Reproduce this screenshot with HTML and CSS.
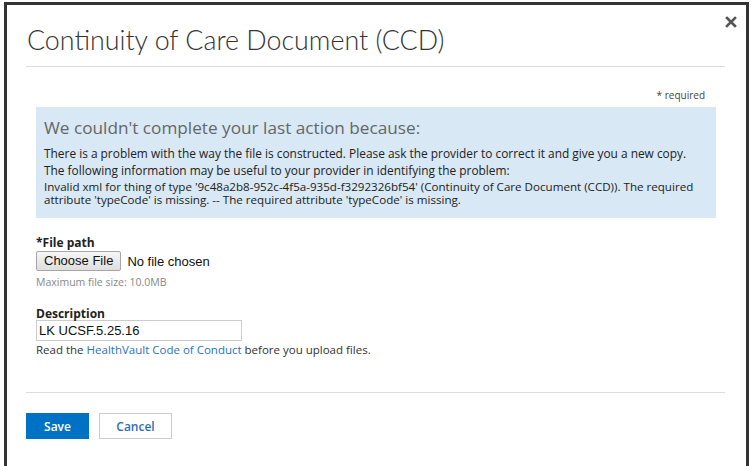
FILE: index.html
```html
<!DOCTYPE html>
<html>
<head>
<meta charset="utf-8">
<link rel="stylesheet" href="styles.css">
</head>
<body>
<div class="modal">
  <button class="close" aria-label="Close">
    <svg width="12" height="12" viewBox="0 0 12 12"><path d="M2 2 L10 10 M10 2 L2 10" stroke="#555" stroke-width="2.6" stroke-linecap="square"/></svg>
  </button>
  <h1 class="title">Continuity of Care Document (CCD)</h1>
  <div class="body">
    <div class="required">* required</div>
    <div class="alert">
      <h2 class="alert-title">We couldn't complete your last action because:</h2>
      <p class="alert-line">There is a problem with the way the file is constructed. Please ask the provider to correct it and give you a new copy.</p>
      <p class="alert-line">The following information may be useful to your provider in identifying the problem:</p>
      <p class="alert-detail">Invalid xml for thing of type '9c48a2b8-952c-4f5a-935d-f3292326bf54' (Continuity of Care Document (CCD)). The required attribute 'typeCode' is missing. -- The required attribute 'typeCode' is missing.</p>
    </div>
    <div class="field">
      <label class="label">*File path</label>
      <div class="file-row"><span class="file-btn">Choose File</span><span class="file-name">No file chosen</span></div>
      <div class="hint">Maximum file size: 10.0MB</div>
    </div>
    <div class="field field-desc">
      <label class="label">Description</label>
      <div class="input">LK UCSF.5.25.16</div>
      <div class="note">Read the <a class="link" href="#">HealthVault Code of Conduct</a> before you upload files.</div>
    </div>
  </div>
  <div class="footer">
    <button class="btn btn-primary">Save</button>
    <button class="btn btn-secondary">Cancel</button>
  </div>
</div>
</body>
</html>
```

FILE: styles.css
```css
html, body {
  margin: 0;
  padding: 0;
  background: #fff;
  overflow: hidden;
}
body {
  font-family: "Open Sans", "Noto Sans", sans-serif;
  color: #222;
}
.modal {
  position: relative;
  margin: 2px 0 0 4px;
  width: 745px;
  height: 480px;
  border: 3px solid #333;
  border-bottom: none;
  background: #fff;
  padding: 0 21px 0 19px;
  box-sizing: border-box;
}
.close {
  position: absolute;
  right: 8px;
  top: 10px;
  width: 14px;
  height: 14px;
  padding: 0;
  border: none;
  background: none;
  display: flex;
  align-items: center;
  justify-content: center;
}
.title {
  margin: 0;
  padding-top: 18px;
  height: 43px;
  font-family: "Lato", "Open Sans", sans-serif;
  font-weight: 300;
  font-size: 26.8px;
  line-height: 34px;
  color: #333;
  border-bottom: 1px solid #ddd;
  padding-left: 1px;
  box-sizing: content-box;
}
.body {
  padding: 0 9px 0 10px;
}
.required {
  text-align: right;
  font-size: 10px;
  color: #444;
  padding-right: 11px;
  margin-top: 20px;
  height: 20px;
  line-height: 16px;
}
.alert {
  background: #d8e8f4;
  height: 111px;
  box-sizing: border-box;
  padding: 10px 8px 0 8px;
}
.alert-title {
  margin: 0 0 6px 0;
  font-weight: 400;
  font-size: 17.2px;
  line-height: 22px;
  color: #666;
}
.alert-line {
  margin: 0;
  font-size: 11.9px;
  line-height: 17px;
  color: #222;
}
.alert-detail {
  margin: 1px 0 0 0;
  font-size: 11.6px;
  line-height: 13px;
  color: #222;
}
.field {
  margin-top: 17px;
}
.field-desc {
  margin-top: 16px;
}
.label {
  display: block;
  font-weight: 700;
  font-size: 12px;
  line-height: 16px;
  color: #222;
}
.field-desc .label {
  line-height: 13px;
  padding-top: 1px;
}
.file-row {
  display: flex;
  align-items: center;
  gap: 6px;
  font-family: "Liberation Sans", Arial, sans-serif;
  font-size: 13px;
  color: #111;
}
.file-btn {
  display: inline-block;
  height: 20px;
  line-height: 18px;
  box-sizing: border-box;
  padding: 0 7px;
  border: 1px solid #a6a6a6;
  border-radius: 2px;
  background: linear-gradient(#f6f6f6, #dedede);
}
.hint {
  font-size: 10.5px;
  color: #888;
  margin-top: 3px;
  line-height: 16px;
}
.input {
  width: 206px;
  height: 21px;
  box-sizing: border-box;
  border: 1px solid #ccc;
  font-family: "Liberation Sans", Arial, sans-serif;
  font-size: 13px;
  line-height: 19px;
  padding-left: 2px;
  color: #111;
}
.note {
  font-size: 11.5px;
  line-height: 18px;
  color: #333;
}
.link {
  color: #2a72c0;
  text-decoration: none;
}
.footer {
  margin-top: 33px;
  border-top: 1px solid #ddd;
  padding-top: 20px;
  display: flex;
  gap: 10px;
}
.btn {
  height: 26px;
  box-sizing: border-box;
  font-family: "Open Sans", sans-serif;
  font-weight: 600;
  font-size: 12px;
  padding: 0;
  cursor: pointer;
}
.btn-primary {
  width: 63px;
  background: #0072c6;
  color: #fff;
  border: none;
}
.btn-secondary {
  width: 73px;
  background: #fff;
  color: #2a6ebb;
  border: 1px solid #ccc;
}
```
